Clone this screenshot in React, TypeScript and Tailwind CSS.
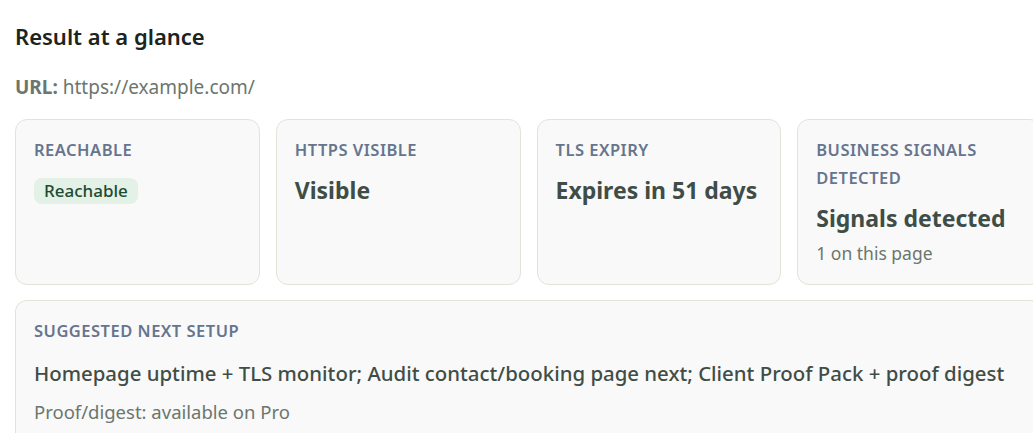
const cards = [
  { label: "Reachable", badge: "Reachable" },
  { label: "HTTPS visible", value: "Visible" },
  { label: "TLS expiry", value: "Expires in 51 days" },
  { label: "Business signals detected", value: "Signals detected", note: "1 on this page" },
];

export default function App() {
  return (
    <div
      className="w-[1057px] bg-white px-[15px] pt-[21px] text-[#3f4d46]"
      style={{ fontFamily: '"Noto Sans", "Open Sans", sans-serif' }}
    >
      <h2 className="text-[22px] font-semibold leading-[30px] text-[#1c2420]">Result at a glance</h2>
      <p className="mt-[23px] text-[19px] leading-[26px] text-[#6b766f]">
        <span className="font-bold text-[#6b766f]">URL:</span> https://example.com/
      </p>

      <div className="mt-[19px] grid grid-cols-4 gap-4">
        {cards.map((c) => (
          <div
            key={c.label}
            className="h-[166px] rounded-xl border border-[#e3e3d8] bg-[#f9f9f9] px-[18px] pt-[16px]"
          >
            <div className="text-[16.5px] leading-[28px] font-semibold tracking-[0.03em] text-[#66758e] uppercase">
              {c.label}
            </div>
            {c.badge && (
              <span className="mt-[14px] inline-block rounded-lg bg-[#e3f1e7] px-[10px] py-[1px] text-[17px] leading-[24px] font-medium text-[#1d4b30]">
                {c.badge}
              </span>
            )}
            {c.value && (
              <div className="mt-[10px] text-[23px] leading-[32px] font-bold text-[#3f4d46]">{c.value}</div>
            )}
            {c.note && <div className="mt-[6px] text-[17.5px] leading-[26px] text-[#6b766f]">{c.note}</div>}
          </div>
        ))}
      </div>

      <div className="mt-[15px] rounded-t-xl border border-b-0 border-[#e3e3d8] bg-[#f9f9f9] px-[18px] pt-[16px] pb-[20px]">
        <div className="text-[16.5px] leading-[28px] font-semibold tracking-[0.03em] text-[#66758e] uppercase">
          Suggested next setup
        </div>
        <div className="mt-[13px] text-[20.4px] leading-[30px] font-medium text-[#3f4d46]">
          Homepage uptime + TLS monitor; Audit contact/booking page next; Client Proof Pack + proof digest
        </div>
        <div className="mt-[11px] text-[18.5px] leading-[26px] text-[#6b766f]">Proof/digest: available on Pro</div>
      </div>
    </div>
  );
}
